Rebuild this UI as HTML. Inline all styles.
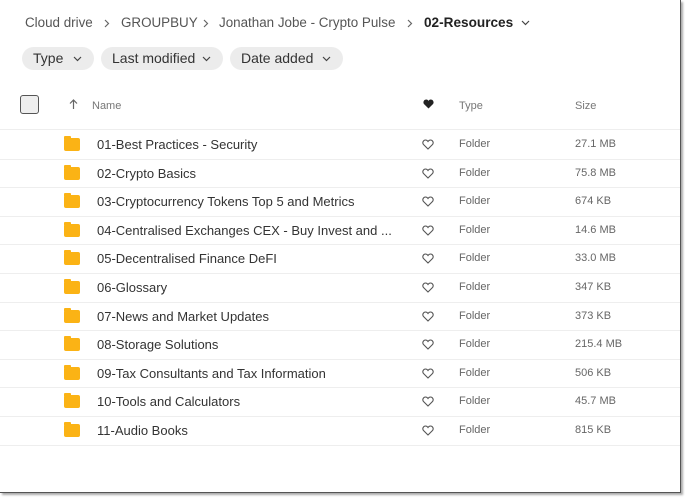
<!DOCTYPE html><html><head><style>
body{margin:0;width:685px;height:498px;background:#fff;font-family:"Liberation Sans",sans-serif;position:relative;overflow:hidden}
.frame{position:absolute;left:0;top:0;width:680px;height:492px;border-right:1px solid #555;border-bottom:1px solid #555;background:#fff;box-shadow:2px 2px 2px #aaa}
.t{position:absolute;white-space:nowrap}
.bc{top:15px;font-size:13.4px;color:#555}
.chip{position:absolute;top:47px;height:23px;border-radius:12px;background:#ececec;font-size:14px;color:#333;line-height:23px;padding-left:11px;box-sizing:border-box}
.chip svg{position:absolute;right:12px;top:9px}
.hd{top:99px;font-size:11px;color:#777}
.row{position:absolute;left:0;width:680px;height:28.6px;border-bottom:1px solid #eee}
.row .n{position:absolute;left:97px;top:7px;font-size:13px;color:#333}
.row .ty{position:absolute;left:459px;top:8px;font-size:11px;color:#666}
.row .sz{position:absolute;left:575px;top:8px;font-size:11px;color:#666}
.fold{position:absolute;left:64px;top:8px;width:16px;height:13px;background:#fbb315;border-radius:2px}
.fold:before{content:"";position:absolute;left:0;top:-2px;width:7px;height:3px;background:#fbb315;border-radius:1px 1px 0 0}
.hrt{position:absolute;left:422px;top:9px}
.sep{position:absolute;top:19px}
</style></head><body><div class="frame">
<span class="t bc" style="left:25px">Cloud drive</span>
<svg class="sep" style="left:104px" width="6" height="9" viewBox="0 0 6 9"><path d="M1 1l3.5 3.5L1 8" fill="none" stroke="#666" stroke-width="1.2"/></svg>
<span class="t bc" style="left:121px">GROUPBUY</span>
<svg class="sep" style="left:203px" width="6" height="9" viewBox="0 0 6 9"><path d="M1 1l3.5 3.5L1 8" fill="none" stroke="#666" stroke-width="1.2"/></svg>
<span class="t bc" style="left:219px">Jonathan Jobe - Crypto Pulse</span>
<svg class="sep" style="left:407px" width="6" height="9" viewBox="0 0 6 9"><path d="M1 1l3.5 3.5L1 8" fill="none" stroke="#666" stroke-width="1.2"/></svg>
<span class="t bc" style="left:424px;color:#222;font-weight:bold;font-size:13.6px">02-Resources</span>
<svg style="position:absolute;left:521px;top:20px" width="9" height="6" viewBox="0 0 9 6"><path d="M1 1l3.5 3.5L8 1" fill="none" stroke="#444" stroke-width="1.2"/></svg>
<div class="chip" style="left:22px;width:72px">Type <svg width="9" height="6" viewBox="0 0 9 6"><path d="M1 1l3.5 3.5L8 1" fill="none" stroke="#444" stroke-width="1.2"/></svg></div>
<div class="chip" style="left:101px;width:122px">Last modified <svg width="9" height="6" viewBox="0 0 9 6"><path d="M1 1l3.5 3.5L8 1" fill="none" stroke="#444" stroke-width="1.2"/></svg></div>
<div class="chip" style="left:230px;width:113px">Date added <svg width="9" height="6" viewBox="0 0 9 6"><path d="M1 1l3.5 3.5L8 1" fill="none" stroke="#444" stroke-width="1.2"/></svg></div>
<div style="position:absolute;left:20px;top:95px;width:19px;height:19px;border:1.5px solid #555;border-radius:3px;background:#eee;box-sizing:border-box"></div>
<svg style="position:absolute;left:69px;top:99px" width="9" height="11" viewBox="0 0 9 11"><path d="M4.5 10V1M1 4.5l3.5-3.5L8 4.5" fill="none" stroke="#666" stroke-width="1.2"/></svg>
<span class="t hd" style="left:92px;top:100px">Name</span>
<svg style="position:absolute;left:423px;top:99px" width="11" height="10" viewBox="0 0 24 22"><path d="M12 21L2 11C-1 7 2 1 7 1c2.5 0 4 1.5 5 3 1-1.5 2.5-3 5-3 5 0 8 6 5 10z" fill="#222"/></svg>
<span class="t hd" style="left:459px;top:100px">Type</span>
<span class="t hd" style="left:575px;top:100px">Size</span>
<div style="position:absolute;left:0;top:129px;width:680px;border-top:1px solid #eee"></div>
<div id="rows"></div>
<script>
var d=[["01-Best Practices - Security","27.1 MB"],["02-Crypto Basics","75.8 MB"],["03-Cryptocurrency Tokens Top 5 and Metrics","674 KB"],["04-Centralised Exchanges CEX - Buy Invest and ...","14.6 MB"],["05-Decentralised Finance DeFI","33.0 MB"],["06-Glossary","347 KB"],["07-News and Market Updates","373 KB"],["08-Storage Solutions","215.4 MB"],["09-Tax Consultants and Tax Information","506 KB"],["10-Tools and Calculators","45.7 MB"],["11-Audio Books","815 KB"]];
var h="";d.forEach(function(r,i){h+='<div class="row" style="top:'+(130+i*28.6)+'px"><div class="fold"></div><span class="n">'+r[0]+'</span><svg class="hrt" width="12" height="11" viewBox="0 0 24 22"><path d="M12 20L3 11C0 7.5 2.5 2 7 2c2.5 0 4 1.5 5 3 1-1.5 2.5-3 5-3 4.5 0 7 5.5 4 9z" fill="none" stroke="#555" stroke-width="2.2"/></svg><span class="ty">Folder</span><span class="sz">'+r[1]+'</span></div>'});
document.getElementById("rows").innerHTML=h;
</script>
</div></body></html>
